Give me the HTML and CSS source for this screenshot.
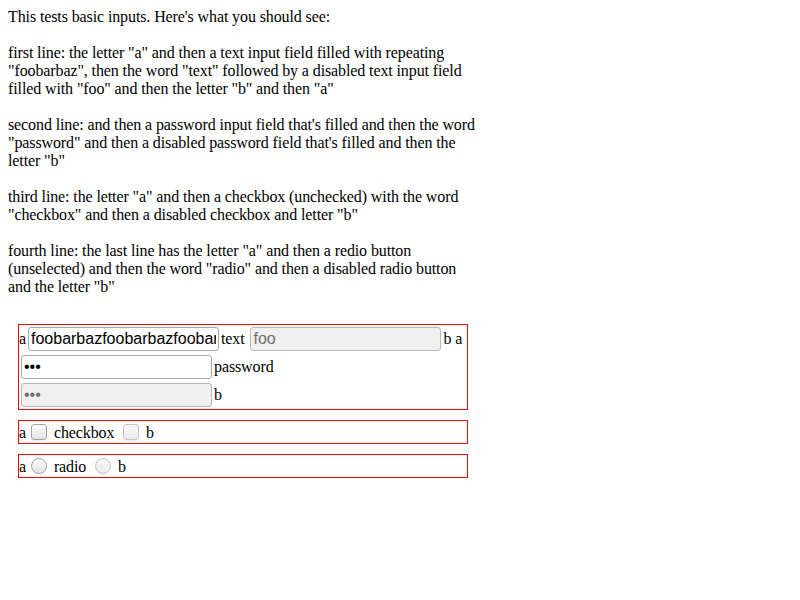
FILE: index.html
```html
<!DOCTYPE html>
<html>
<head>
<meta charset="utf-8">
<link rel="stylesheet" href="styles.css">
</head>
<body>
<div class="page">
This tests basic inputs. Here's what you should see:<br><br>
first line: the letter "a" and then a text input field filled with repeating "foobarbaz", then the word "text" followed by a disabled text input field filled with "foo" and then the letter "b" and then "a"<br><br>
second line: and then a password input field that's filled and then the word "password" and then a disabled password field that's filled and then the letter "b"<br><br>
third line: the letter "a" and then a checkbox (unchecked) with the word "checkbox" and then a disabled checkbox and letter "b"<br><br>
fourth line: the last line has the letter "a" and then a redio button (unselected) and then the word "radio" and then a disabled radio button and the letter "b"<br><br>
</div>
<div class="box">a<input class="field" type="text" value="foobarbazfoobarbazfoobarbaz">text <input class="field" type="text" disabled value="foo">b a<br><input class="field" type="password" value="foo">password<br><input class="field" type="password" disabled value="foo">b</div>
<div class="box">a<input class="check" type="checkbox"> checkbox <input class="check" type="checkbox" disabled> b</div>
<div class="box">a<input class="check radio" type="radio"> radio <input class="check radio" type="radio" disabled> b</div>
</body>
</html>
```
FILE: styles.css
```css
body {
  margin: 8px;
  font-family: "Liberation Serif", "Times New Roman", serif;
  font-size: 16px;
  letter-spacing: -0.11px;
  color: #000;
  background: #fff;
}
.page {
  width: 470px;
}
.box {
  width: 448px;
  border: 1px solid red;
  margin: 10px;
}
.field {
  font-family: "Liberation Sans", Arial, sans-serif;
  font-size: 16px;
  letter-spacing: 0;
  margin: 2px;
  width: 185px;
  height: 18px;
  padding: 2px 2px;
  border: 1px solid #a9a9a9;
  border-radius: 3px;
  background: #fff;
  color: #000;
  outline: none;
}
.field:disabled {
  background: #f0f0f0;
  border-color: #b9b9b9;
  color: #6f6f6f;
}
.check {
  appearance: none;
  -webkit-appearance: none;
  box-sizing: border-box;
  width: 16px;
  height: 16px;
  margin: 3px 3px 3px 5px;
  vertical-align: -5px;
  border: 1px solid #a4a4a4;
  border-radius: 3px;
  background: linear-gradient(#fbfbfb, #e4e4e4);
  box-shadow: 0 1px 0 rgba(0, 0, 0, 0.06);
}
.check:disabled {
  border-color: #c6c6c6;
  background: linear-gradient(#f7f7f7, #ececec);
}
.radio {
  border-radius: 50%;
}
```
